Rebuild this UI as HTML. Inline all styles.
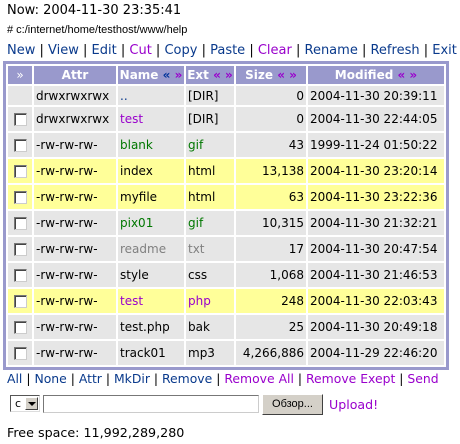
<!DOCTYPE html>
<html><head><meta charset="utf-8"><style>
body{margin:0;background:#fff;font-family:"DejaVu Sans",Verdana,sans-serif;font-size:13px;color:#000;width:460px;height:444px;overflow:hidden;position:relative}
.a{position:absolute;white-space:nowrap}
a{text-decoration:none;color:#0a3a8c}
.p{color:#9900cc}
.g{color:#007700}
.gr{color:#808080}
table{position:absolute;left:3px;top:61px;border:3px solid #9999cc;border-collapse:separate;border-spacing:2px;background:#fff;table-layout:fixed;width:446px}
td,th{padding:0 2px;white-space:nowrap;font-size:12px;background:#e6e6e6;overflow:hidden}
th{background:#9999cc;color:#fff;height:18px;font-weight:bold;padding:0}
tr{height:24px}
tr.y td{background:#ffff99}
.r{text-align:right}
.cb{display:inline-block;width:11px;height:11px;border:1px solid #777;border-right-color:#ccc;border-bottom-color:#ccc;background:#fff;box-shadow:inset 1px 1px 0 #444;vertical-align:middle}
.c{text-align:center}
</style></head><body>
<div class="a" style="left:7px;top:3px">Now: 2004-11-30 23:35:41</div>
<div class="a" style="left:7px;top:24px;font-family:'Liberation Sans',Arial,sans-serif;font-size:11px"># c:/internet/home/testhost/www/help</div>
<div class="a" style="left:7px;top:43px"><a>New</a> | <a>View</a> | <a>Edit</a> | <a class="p">Cut</a> | <a>Copy</a> | <a>Paste</a> | <a class="p">Clear</a> | <a>Rename</a> | <a>Refresh</a> | <a>Exit</a></div>
<table>
<colgroup><col style="width:24px"><col style="width:82px"><col style="width:66px"><col style="width:48px"><col style="width:70px"><col style="width:136px"></colgroup>
<tr style="height:18px"><th style="font-weight:normal">»</th><th>Attr</th><th>Name <span style="color:#003399">«</span> <span class="p">»</span></th><th>Ext <span class="p">« »</span></th><th>Size <span class="p">« »</span></th><th>Modified <span class="p">« »</span></th></tr>
<tr style="height:19px"><td></td><td>drwxrwxrwx</td><td><a>..</a></td><td>[DIR]</td><td class="r">0</td><td>2004-11-30 20:39:11</td></tr>
<tr><td class="c"><span class="cb"></span></td><td>drwxrwxrwx</td><td><a class="p">test</a></td><td>[DIR]</td><td class="r">0</td><td>2004-11-30 22:44:05</td></tr>
<tr><td class="c"><span class="cb"></span></td><td>-rw-rw-rw-</td><td class="g">blank</td><td class="g">gif</td><td class="r">43</td><td>1999-11-24 01:50:22</td></tr>
<tr class="y"><td class="c"><span class="cb"></span></td><td>-rw-rw-rw-</td><td>index</td><td>html</td><td class="r">13,138</td><td>2004-11-30 23:20:14</td></tr>
<tr class="y"><td class="c"><span class="cb"></span></td><td>-rw-rw-rw-</td><td>myfile</td><td>html</td><td class="r">63</td><td>2004-11-30 23:22:36</td></tr>
<tr><td class="c"><span class="cb"></span></td><td>-rw-rw-rw-</td><td class="g">pix01</td><td class="g">gif</td><td class="r">10,315</td><td>2004-11-30 21:32:21</td></tr>
<tr><td class="c"><span class="cb"></span></td><td>-rw-rw-rw-</td><td class="gr">readme</td><td class="gr">txt</td><td class="r">17</td><td>2004-11-30 20:47:54</td></tr>
<tr><td class="c"><span class="cb"></span></td><td>-rw-rw-rw-</td><td>style</td><td>css</td><td class="r">1,068</td><td>2004-11-30 21:46:53</td></tr>
<tr class="y"><td class="c"><span class="cb"></span></td><td>-rw-rw-rw-</td><td class="p">test</td><td class="p">php</td><td class="r">248</td><td>2004-11-30 22:03:43</td></tr>
<tr><td class="c"><span class="cb"></span></td><td>-rw-rw-rw-</td><td>test.php</td><td>bak</td><td class="r">25</td><td>2004-11-30 20:49:18</td></tr>
<tr><td class="c"><span class="cb"></span></td><td>-rw-rw-rw-</td><td>track01</td><td>mp3</td><td class="r">4,266,886</td><td>2004-11-29 22:46:20</td></tr>
</table>
<div class="a" style="left:7px;top:371px;font-size:12.4px"><a>All</a> | <a>None</a> | <a>Attr</a> | <a>MkDir</a> | <a>Remove</a> | <a class="p">Remove All</a> | <a class="p">Remove Exept</a> | <a class="p">Send</a></div>
<div class="a" style="left:10px;top:395px;width:30px;height:17px;border:1px solid #555;border-right-color:#ddd;border-bottom-color:#ddd;background:#fff;box-sizing:border-box"><span style="position:absolute;left:4px;top:1px;font-size:11px">c</span><span style="position:absolute;right:1px;top:1px;width:13px;height:13px;background:#d4d0c8;border:1px solid #fff;border-right-color:#404040;border-bottom-color:#404040;box-sizing:border-box"><span style="position:absolute;left:2px;top:4px;border-left:4px solid transparent;border-right:4px solid transparent;border-top:4px solid #000"></span></span></div>
<div class="a" style="left:43px;top:395px;width:216px;height:18px;border:1px solid #777;border-right-color:#ccc;border-bottom-color:#ccc;box-sizing:border-box;background:#fff"></div>
<div class="a" style="left:262px;top:394px;width:61px;height:21px;background:#d4d0c8;border:1px solid #fff;border-right-color:#404040;border-bottom-color:#404040;box-sizing:border-box;font-family:'Liberation Sans',Arial,sans-serif;font-size:11px;text-align:center;line-height:19px">Обзор...</div>
<div class="a p" style="left:329px;top:397px;font-size:12.6px">Upload!</div>
<div class="a" style="left:7px;top:425px;font-size:12.7px">Free space: 11,992,289,280</div>
</body></html>
